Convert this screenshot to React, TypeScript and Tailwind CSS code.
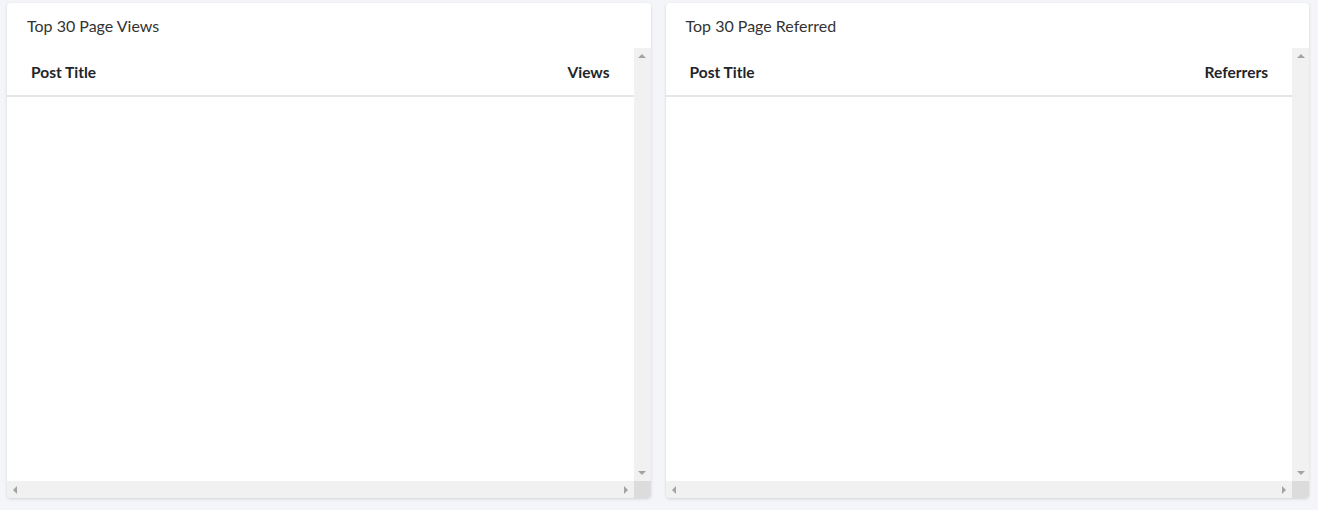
import React from 'react';

const panels = [
  { title: 'Top 30 Page Views', col: 'Views' },
  { title: 'Top 30 Page Referred', col: 'Referrers' },
];

const Arrow = ({ dir }: { dir: 'up' | 'down' | 'left' | 'right' }) => {
  const pts = {
    up: '0,4 4,0 8,4',
    down: '0,0 8,0 4,4',
    left: '4,0 4,8 0,4',
    right: '0,0 0,8 4,4',
  }[dir];
  const vertical = dir === 'up' || dir === 'down';
  return (
    <svg width={vertical ? 8 : 4} height={vertical ? 4 : 8} viewBox={vertical ? '0 0 8 4' : '0 0 4 8'}>
      <polygon points={pts} fill="#a3a3a3" />
    </svg>
  );
};

const Panel = ({ title, col }: { title: string; col: string }) => (
  <div className="flex h-[495px] flex-col overflow-hidden rounded-[4px] bg-white shadow-[0_1px_3px_rgba(0,0,0,0.14)]">
    <div className="flex h-[45px] shrink-0 items-center px-5 text-[16px] text-[#333]">{title}</div>
    <div className="flex min-h-0 flex-1">
      <div className="flex-1">
        <div className="flex h-[49px] items-center justify-between border-b-2 border-[#e3e5e8] px-6 pt-[2px] text-[15.5px] font-bold text-[#212529]">
          <span>Post Title</span>
          <span>{col}</span>
        </div>
      </div>
      <div className="flex w-[17px] flex-col items-center justify-between bg-[#f1f1f1] py-[6px]">
        <Arrow dir="up" />
        <Arrow dir="down" />
      </div>
    </div>
    <div className="flex h-[17px] shrink-0">
      <div className="flex flex-1 items-center justify-between bg-[#f1f1f1] px-[6px]">
        <Arrow dir="left" />
        <Arrow dir="right" />
      </div>
      <div className="w-[17px] bg-[#dcdcdc]" />
    </div>
  </div>
);

export default function App() {
  return (
    <div className="h-[510px] w-full bg-[#f4f5f8] pl-[7px] pr-[9px] pt-[3px]" style={{ fontFamily: 'Lato, "Liberation Sans", sans-serif' }}>
      <div className="grid grid-cols-2 gap-[15px]">
        {panels.map(p => (
          <Panel key={p.title} title={p.title} col={p.col} />
        ))}
      </div>
    </div>
  );
}
